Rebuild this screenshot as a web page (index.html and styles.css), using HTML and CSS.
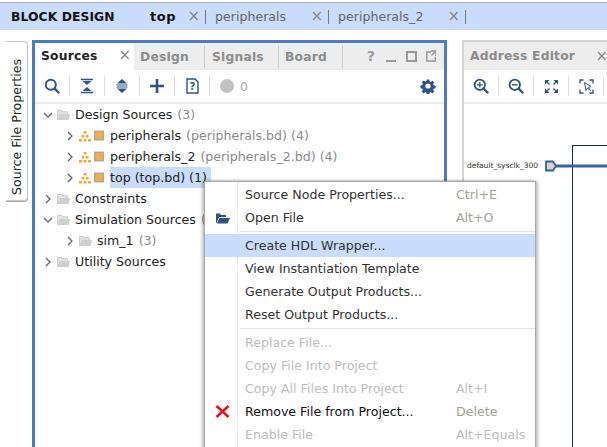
FILE: index.html
```html
<!DOCTYPE html>
<html lang="en">
<head>
<meta charset="utf-8">
<title>Block Design</title>
<link rel="stylesheet" href="styles.css">
</head>
<body>
<div class="app">
  <header class="titlebar">
    <span class="brand">BLOCK DESIGN</span>
    <div class="doc doc-top"><b>top</b><span class="x">×</span></div>
    <div class="doc doc-p"><span>peripherals</span><span class="x">×</span></div>
    <div class="doc doc-p2"><span>peripherals_2</span><span class="x">×</span></div>
  </header>
  <main class="workspace">
    <div class="sidetab"><span>Source File Properties</span></div>
    <section class="sources">
      <div class="tabs">
        <div class="tab active">Sources<span class="x">×</span></div>
        <div class="tab t-design">Design</div>
        <div class="tab t-signals">Signals</div>
        <div class="tab t-board">Board</div>
        <div class="winbtns">
          <span class="q">?</span>
          <svg width="50" height="16" viewBox="0 0 50 16"><path d="M0 13h10" stroke="#999" stroke-width="2"/><path d="M21 4h9v9h-9z" fill="none" stroke="#999" stroke-width="2"/><path d="M45 4h-4.200v9h8.500V9M45 3h5v5M49.500 3.500l-4 4" fill="none" stroke="#999" stroke-width="1.500"/></svg>
        </div>
      </div>
      <div class="toolbar">
        <span class="tool"><svg width="16" height="16" viewBox="0 0 16 16"><circle cx="6.800" cy="6.800" r="5" fill="none" stroke="#2f5288" stroke-width="2"/><path d="M10.500 10.500l4 4" stroke="#2f5288" stroke-width="2.400" stroke-linecap="round"/></svg></span>
        <span class="tool"><svg width="14" height="16" viewBox="0 0 14 16"><path d="M1 1.500h12M1 14.500h12" stroke="#2f5288" stroke-width="1.600"/><path d="M2.500 3l4.500 4 4.500-4zM2.500 13l4.500-4 4.500 4z" fill="#2f5288"/></svg></span>
        <span class="tool"><svg width="14" height="16" viewBox="0 0 14 16"><path d="M7 1l5 4.500H2zM7 15l5-4.500H2z" fill="#2f5288"/><path d="M1.500 7h11M1.500 9h11" stroke="#2f5288" stroke-width="1.200"/></svg></span>
        <span class="tool"><svg width="14" height="14" viewBox="0 0 14 14"><path d="M7 0v14M0 7h14" stroke="#2f5288" stroke-width="2.600"/></svg></span>
        <span class="tool"><svg width="13" height="16" viewBox="0 0 13 16"><path d="M1 1h8l3 3v11H1z" fill="#fff" stroke="#2f5288" stroke-width="1.400"/><text x="6.500" y="12" class="qm">?</text></svg></span>
        <span class="status"><i class="dot"></i>0</span>
        <svg class="gear" width="16" height="16" viewBox="0 0 16 16"><path d="M6.700 1h2.600l.4 2 1.300.6 1.800-1.100 1.800 1.800-1.100 1.800.6 1.300 2 .4v2.600l-2 .4-.6 1.300 1.100 1.800-1.800 1.800-1.800-1.100-1.300.6-.4 2H6.700l-.4-2-1.300-.6-1.800 1.100-1.800-1.800 1.100-1.800-.6-1.300-2-.4V7.400l2-.4.6-1.300-1.100-1.800 1.800-1.800 1.800 1.100 1.300-.6z" fill="#2f5288" transform="translate(.5 .5) scale(.94)"/><circle cx="8" cy="8" r="2.600" fill="#fff"/></svg>
      </div>
      <div class="strip"></div>
      <ul class="tree">
        <li class="node l0"><svg class="chev" width="10" height="10" viewBox="0 0 10 10"><path d="M1 3l4 4 4-4" fill="none" stroke="#666" stroke-width="1.300"/></svg><svg class="folder" width="13" height="12" viewBox="0 0 14 12"><use href="#fld"/></svg>Design Sources<em>(3)</em></li>
        <li class="node l1"><svg class="chev" width="10" height="10" viewBox="0 0 10 10"><path d="M3 1l4 4-4 4" fill="none" stroke="#666" stroke-width="1.300"/></svg><svg class="bd" width="25" height="12" viewBox="0 0 25 12"><use href="#bdi"/></svg>peripherals<em>(peripherals.bd) (4)</em></li>
        <li class="node l1"><svg class="chev" width="10" height="10" viewBox="0 0 10 10"><path d="M3 1l4 4-4 4" fill="none" stroke="#666" stroke-width="1.300"/></svg><svg class="bd" width="25" height="12" viewBox="0 0 25 12"><use href="#bdi"/></svg>peripherals_2<em>(peripherals_2.bd) (4)</em></li>
        <li class="node l1"><svg class="chev" width="10" height="10" viewBox="0 0 10 10"><path d="M3 1l4 4-4 4" fill="none" stroke="#666" stroke-width="1.300"/></svg><svg class="bd" width="25" height="12" viewBox="0 0 25 12"><use href="#bdi"/></svg><span class="hl">top (top.bd) (1)</span></li>
        <li class="node l0"><svg class="chev" width="10" height="10" viewBox="0 0 10 10"><path d="M3 1l4 4-4 4" fill="none" stroke="#666" stroke-width="1.300"/></svg><svg class="folder" width="13" height="12" viewBox="0 0 14 12"><use href="#fld"/></svg>Constraints</li>
        <li class="node l0"><svg class="chev" width="10" height="10" viewBox="0 0 10 10"><path d="M1 3l4 4 4-4" fill="none" stroke="#666" stroke-width="1.300"/></svg><svg class="folder" width="13" height="12" viewBox="0 0 14 12"><use href="#fld"/></svg>Simulation Sources<em>(3)</em></li>
        <li class="node l1"><svg class="chev" width="10" height="10" viewBox="0 0 10 10"><path d="M3 1l4 4-4 4" fill="none" stroke="#666" stroke-width="1.300"/></svg><svg class="folder" width="13" height="12" viewBox="0 0 14 12"><use href="#fld"/></svg>sim_1<em>(3)</em></li>
        <li class="node l0"><svg class="chev" width="10" height="10" viewBox="0 0 10 10"><path d="M3 1l4 4-4 4" fill="none" stroke="#666" stroke-width="1.300"/></svg><svg class="folder" width="13" height="12" viewBox="0 0 14 12"><use href="#fld"/></svg>Utility Sources</li>
      </ul>
    </section>
    <section class="address">
      <div class="tabs atabs"><div class="tab atitle">Address Editor</div><span class="x">×</span></div>
      <div class="toolbar">
        <span class="tool"><svg width="16" height="16" viewBox="0 0 16 16"><circle cx="6.800" cy="6.800" r="5.200" fill="none" stroke="#2f5288" stroke-width="1.800"/><path d="M10.500 10.500l4 4" stroke="#2f5288" stroke-width="2.400" stroke-linecap="round"/><path d="M4 6.800h5.600M6.800 4v5.600" stroke="#2f5288" stroke-width="1.200"/></svg></span>
        <span class="tool"><svg width="16" height="16" viewBox="0 0 16 16"><circle cx="6.800" cy="6.800" r="5.200" fill="none" stroke="#2f5288" stroke-width="1.800"/><path d="M10.500 10.500l4 4" stroke="#2f5288" stroke-width="2.400" stroke-linecap="round"/><path d="M4 6.800h5.600" stroke="#2f5288" stroke-width="1.400"/></svg></span>
        <span class="tool"><svg width="15" height="15" viewBox="0 0 15 15"><path d="M1 1h4.500L1 5.500zM14 1H9.500L14 5.500zM1 14h4.500L1 9.500zM14 14H9.500L14 9.500z" fill="#2f5288"/><path d="M2 2l3.500 3.500M13 2L9.500 5.500M2 13l3.500-3.500M13 13L9.500 9.500" stroke="#2f5288" stroke-width="1.400"/></svg></span>
        <span class="tool"><svg width="15" height="15" viewBox="0 0 15 15"><path d="M1 4.500V1h3.500M10.500 1H14v3.500M1 10.500V14h3.500M10.500 14H14v-3.500" fill="none" stroke="#2f5288" stroke-width="1.300"/><path d="M5.500 3.500l1.500 8 1.500-2.500 3 2.500-2-3 2.500-1z" fill="#fff" stroke="#2f5288"/></svg></span>
      </div>
      <div class="strip"></div>
      <div class="canvas">
        <span class="portname">default_sysclk_300</span>
        <svg class="port" width="62" height="12" viewBox="0 0 62 12"><path d="M11 6h51" stroke="#3f5f9e" stroke-width="3"/><path d="M1 1.500h7l3 4.500-3 4.500H1z" fill="#d8cfcf" stroke="#2e6a80" stroke-width="1.800"/></svg>
        <div class="block"></div>
      </div>
    </section>
  </main>
  <nav class="menu">
    <div class="mi"><span class="mi-ic"></span><span class="lbl">Source Node Properties...</span><kbd>Ctrl+E</kbd></div>
    <div class="mi"><span class="mi-ic"><svg width="15" height="12" viewBox="0 0 15 12"><path d="M1 11V1.500h4l1 1.500h5v2H4L1.500 11z" fill="#2f5288"/><path d="M4.500 6H15l-2.500 5.500H1.800z" fill="#2f5288"/></svg></span><span class="lbl">Open File</span><kbd>Alt+O</kbd></div>
    <hr>
    <div class="mi on"><span class="mi-ic"></span><span class="lbl">Create HDL Wrapper...</span></div>
    <div class="mi"><span class="mi-ic"></span><span class="lbl">View Instantiation Template</span></div>
    <div class="mi"><span class="mi-ic"></span><span class="lbl">Generate Output Products...</span></div>
    <div class="mi"><span class="mi-ic"></span><span class="lbl">Reset Output Products...</span></div>
    <hr>
    <div class="mi off"><span class="mi-ic"></span><span class="lbl">Replace File...</span></div>
    <div class="mi off"><span class="mi-ic"></span><span class="lbl">Copy File Into Project</span></div>
    <div class="mi off"><span class="mi-ic"></span><span class="lbl">Copy All Files Into Project</span><kbd>Alt+I</kbd></div>
    <div class="mi strong"><span class="mi-ic"><svg width="15" height="13" viewBox="0 0 15 13"><path d="M1.500 1l12 11M13.500 1l-12 11" stroke="#e8141c" stroke-width="2.600"/></svg></span><span class="lbl">Remove File from Project...</span><kbd>Delete</kbd></div>
    <div class="mi off"><span class="mi-ic"></span><span class="lbl">Enable File</span><kbd>Alt+Equals</kbd></div>
  </nav>
  <svg class="defs" width="0" height="0">
    <symbol id="fld" viewBox="0 0 14 12"><path d="M.500 11V1h4.500l1.200 1.500h5V5" fill="#e2e2e2" stroke="#c8c8c8"/><path d="M3 5h11l-1.500 6.500H.500z" fill="#cfcfcf"/></symbol>
    <symbol id="bdi" viewBox="0 0 25 12"><path d="M4.700 1h2.800v2.500H4.700zM2.600 5h2.800v2.500H2.600zM6.800 5h2.800v2.500H6.800zM0 9h3v2.500H0zM4.500 9h3v2.500h-3zM9 9h3v2.500H9z" fill="#f4a83a"/><rect x="15.750" y="1.250" width="8.500" height="8.500" fill="#fbab3c" stroke="#a9a9a9" stroke-width="1.500"/></symbol>
  </svg>
</div>
</body>
</html>
```

FILE: styles.css
```css
* { box-sizing: border-box; }
html, body { margin: 0; padding: 0; background: #fff; }
body { font-family: "DejaVu Sans", sans-serif; font-size: 12.600px; color: #222; }
.app { position: relative; width: 607px; height: 447px; overflow: hidden; }
.defs { position: absolute; }

.titlebar { display: flex; align-items: center; height: 28px; margin-top: 2px; padding-left: 11px; background: #c9dcfb; border-top: 1px solid #b0b0b0; }
.brand { width: 139px; font-weight: 700; font-size: 12.300px; color: #111; letter-spacing: .1px; }
.doc { display: flex; align-items: center; justify-content: space-between; height: 14px; padding-right: 5px; border-right: 1px solid #777; color: #666; margin-right: 9px; }
.doc b { color: #111; font-size: 13px; letter-spacing: .5px; }
.doc-top { width: 56px; }
.doc-p { width: 114px; }
.doc-p2 { width: 128px; }
.x { font-size: 15px; line-height: 1; color: #888; }

.workspace { display: flex; height: 417px; padding-top: 10px; }
.sidetab { width: 22px; height: 160px; margin: 1px 4px 0 6px; border: 1px solid #c8c8c8; border-left: 0; border-radius: 0 4px 4px 0; background: #fff; box-shadow: 0 1px 0 #aaa; display: flex; align-items: flex-start; justify-content: center; }
.sidetab span { writing-mode: vertical-rl; transform: rotate(180deg); height: 138px; margin-top: 15px; white-space: nowrap; color: #222; }

.sources { width: 415px; height: 407px; margin-right: 15px; border: 3px solid #4a7cc9; border-bottom: 0; flex: none; }
.tabs { display: flex; align-items: stretch; height: 27px; background: #ededed; font-weight: 700; font-size: 12.300px; letter-spacing: .2px; color: #8c8c8c; }
.tab { display: flex; align-items: center; border-right: 1px solid #ccc; margin: 3px 0 2px; padding: 0 0 1px 7px; }
.tab.active { background: #fff; width: 99px; margin: 0; padding: 0 3px 2px 6px; color: #222; border: 0; justify-content: space-between; }
.tab.active .x { font-weight: 400; letter-spacing: 0; }
.t-design { width: 71px; padding-left: 6px; }
.t-signals { width: 74px; }
.t-board { width: 64px; padding-left: 6px; }
.winbtns { display: flex; align-items: center; gap: 11px; margin-left: auto; padding: 0 8px 2px 0; }
.q { font-size: 14px; color: #999; }

.toolbar { display: flex; align-items: center; height: 32px; background: #fff; }
.tool { display: flex; align-items: center; justify-content: center; width: 35px; height: 20px; border-right: 1px solid #ddd; flex: none; }
.qm { font: 700 10px "DejaVu Sans", sans-serif; fill: #2f5288; text-anchor: middle; }
.status { display: flex; align-items: center; gap: 6px; margin-left: 10px; color: #aaa; }
.dot { width: 14px; height: 14px; border-radius: 50%; background: #c2c2c2; }
.gear { margin-left: auto; margin-right: 8px; }
.strip { height: 2px; background: #ececec; }

.tree { list-style: none; margin: 0; padding: 0; }
.node { display: flex; align-items: center; height: 21px; white-space: nowrap; color: #222; }
.l0 { padding-left: 8px; }
.l1 { padding-left: 30px; }
.node em { font-style: normal; color: #8a8a8a; margin-left: 5px; }
.chev { margin-right: 4px; flex: none; }
.folder { margin-right: 5px; flex: none; }
.bd { margin-right: 6px; flex: none; }
.hl { background: #c9dcfb; height: 21px; line-height: 21px; padding-right: 4px; }

.address { flex: 1; height: 407px; border-left: 2px solid #d4d4d4; border-top: 2px solid #d4d4d4; min-width: 0; }
.atabs { height: 28px; justify-content: space-between; }
.atitle { border: 0; margin: 0; padding: 0 0 0 6px; }
.atabs .x { font-weight: 400; align-self: center; letter-spacing: 0; margin-right: -1px; }
.canvas { position: relative; height: 343px; background: #fff; overflow: hidden; }
.portname { position: absolute; left: 3px; top: 57px; font-size: 7.500px; color: #333; white-space: nowrap; }
.port { position: absolute; left: 81px; top: 56px; z-index: 1; }
.block { position: absolute; left: 108px; top: 41px; width: 100px; height: 320px; border: 1px solid #17283f; }

.menu { position: absolute; left: 204px; top: 181px; width: 332px; height: 280px; background: #fff; border: 1px solid #a9a9a9; padding-top: 1px; box-shadow: 2px 0 3px rgba(0,0,0,.25), -2px 0 3px rgba(0,0,0,.25); z-index: 2; }
.menu::before { content: ""; position: absolute; left: 32px; top: 0; bottom: 0; width: 1px; background: #e8e8e8; }
.mi { position: relative; display: flex; align-items: center; height: 23px; white-space: nowrap; color: #333; }
.mi-ic { width: 40px; flex: none; display: flex; justify-content: center; padding-right: 6px; }
.lbl { width: 211px; flex: none; }
.mi kbd { font: inherit; color: #a3a396; }
.mi.on { background: #c9dcfb; }
.mi.off, .mi.off kbd { color: #bdbdbd; }
.mi.strong { color: #111; }
.menu hr { position: relative; margin: 2px 0 2px 35px; border: 0; border-top: 1px solid #e3e3e3; height: 0; }
```
